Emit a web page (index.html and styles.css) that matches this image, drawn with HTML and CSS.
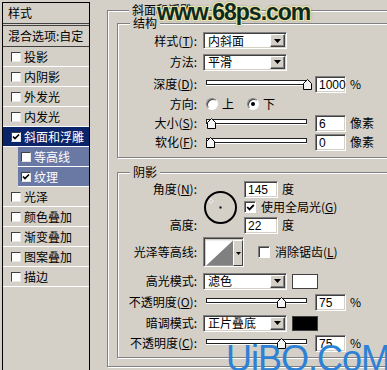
FILE: index.html
```html
<!DOCTYPE html>
<html lang="zh-CN">
<head>
  <meta charset="UTF-8">
  <meta name="viewport" content="width=device-width, initial-scale=1.0">
  <title>图层样式 - 斜面和浮雕</title>
  <link rel="stylesheet" href="styles.css">
</head>
<body>
<div class="dialog">
  <div class="styles-panel">
    <div class="panel-head">样式</div>
    <div class="panel-blend">混合选项:自定</div>
    <ul class="style-list">
      <li><span class="check"></span>投影</li>
      <li><span class="check"></span>内阴影</li>
      <li><span class="check"></span>外发光</li>
      <li><span class="check"></span>内发光</li>
      <li class="active"><span class="check"><svg width="8" height="8" viewBox="0 0 8 8"><path d="M1 3.5L3 5.6L7 1.5" fill="none" stroke="#000" stroke-width="1.7"/></svg></span>斜面和浮雕</li>
      <li class="sub"><span class="check"></span>等高线</li>
      <li class="sub"><span class="check"><svg width="8" height="8" viewBox="0 0 8 8"><path d="M1 3.5L3 5.6L7 1.5" fill="none" stroke="#000" stroke-width="1.7"/></svg></span>纹理</li>
      <li><span class="check"></span>光泽</li>
      <li><span class="check"></span>颜色叠加</li>
      <li><span class="check"></span>渐变叠加</li>
      <li><span class="check"></span>图案叠加</li>
      <li><span class="check"></span>描边</li>
    </ul>
  </div>

  <div class="main">
    <div class="group outer">
      <div class="group-title">斜面和浮雕</div>

      <div class="group structure">
        <div class="group-title">结构</div>
        <div class="form-grid">
          <label>样式(<u>T</u>):</label>
          <div class="select"><span>内斜面</span><span class="drop"><svg width="7" height="4" viewBox="0 0 7 4"><path d="M0 0h7L3.5 4z"/></svg></span></div>

          <label>方法:</label>
          <div class="select"><span>平滑</span><span class="drop"><svg width="7" height="4" viewBox="0 0 7 4"><path d="M0 0h7L3.5 4z"/></svg></span></div>

          <label>深度(<u>D</u>):</label>
          <div class="field">
            <div class="slider"><div class="track"></div><svg class="thumb" style="left: 97px" width="9" height="11" viewBox="0 0 9 11"><path d="M0.5 4.5L4.5 0.5L8.5 4.5V10.5H0.5Z" fill="#f4f4f4" stroke="#000"/></svg></div>
            <span class="num">1000</span><span class="unit">%</span>
          </div>

          <label>方向:</label>
          <div class="field">
            <span class="radio"></span><span class="radio-text">上</span>
            <span class="radio on"></span><span class="radio-text">下</span>
          </div>

          <label>大小(<u>S</u>):</label>
          <div class="field">
            <div class="slider"><div class="track"></div><svg class="thumb" style="left: 1px" width="9" height="11" viewBox="0 0 9 11"><path d="M0.5 4.5L4.5 0.5L8.5 4.5V10.5H0.5Z" fill="#f4f4f4" stroke="#000"/></svg></div>
            <span class="num">6</span><span class="unit">像素</span>
          </div>

          <label>软化(<u>F</u>):</label>
          <div class="field">
            <div class="slider"><div class="track"></div><svg class="thumb" style="left: 0px" width="9" height="11" viewBox="0 0 9 11"><path d="M0.5 4.5L4.5 0.5L8.5 4.5V10.5H0.5Z" fill="#f4f4f4" stroke="#000"/></svg></div>
            <span class="num">0</span><span class="unit">像素</span>
          </div>
        </div>
      </div>

      <div class="group shading">
        <div class="group-title">阴影</div>
        <div class="form-grid shade-grid">
          <label>角度(<u>N</u>):</label>
          <div class="dial">
            <svg width="35" height="35" viewBox="0 0 35 35">
              <circle cx="17.5" cy="17.5" r="15.5" fill="none" stroke="#000" stroke-width="2"/>
              <rect x="16.5" y="16.5" width="2" height="2" fill="#000"/>
              <path d="M8 8.5v5M5.5 11h5" stroke="#fff" stroke-width="1"/>
              <rect x="7.5" y="10.5" width="1" height="1" fill="#555"/>
            </svg>
          </div>
          <div class="field"><span class="num wide">145</span><span class="unit">度</span></div>

          <span></span>
          <div class="field"><span class="box"><svg width="9" height="9" viewBox="0 0 9 9"><path d="M1.2 4L3.5 6.4L7.8 2" fill="none" stroke="#000" stroke-width="1.8"/></svg></span><span class="box-text">使用全局光(<u>G</u>)</span></div>

          <label>高度:</label>
          <div class="field"><span class="num wide">22</span><span class="unit">度</span></div>

          <label>光泽等高线:</label>
          <div class="contour">
            <svg width="28" height="26" viewBox="0 0 28 26"><rect width="28" height="26" fill="#fff"/><path d="M0 26L28 0V26Z" fill="#808080"/></svg>
            <span class="contour-drop"><svg width="5" height="3" viewBox="0 0 5 3"><path d="M0 0h5L2.5 3z"/></svg></span>
          </div>
          <div class="field"><span class="box anti"></span><span class="box-text">消除锯齿(<u>L</u>)</span></div>

          <label>高光模式:</label>
          <div class="field span">
            <div class="select"><span>滤色</span><span class="drop"><svg width="7" height="4" viewBox="0 0 7 4"><path d="M0 0h7L3.5 4z"/></svg></span></div>
            <span class="swatch light"></span>
          </div>

          <label>不透明度(<u>O</u>):</label>
          <div class="field span">
            <div class="slider"><div class="track"></div><svg class="thumb" style="left: 71px" width="9" height="11" viewBox="0 0 9 11"><path d="M0.5 4.5L4.5 0.5L8.5 4.5V10.5H0.5Z" fill="#f4f4f4" stroke="#000"/></svg></div>
            <span class="num">75</span><span class="unit">%</span>
          </div>

          <label>暗调模式:</label>
          <div class="field span">
            <div class="select"><span>正片叠底</span><span class="drop"><svg width="7" height="4" viewBox="0 0 7 4"><path d="M0 0h7L3.5 4z"/></svg></span></div>
            <span class="swatch dark"></span>
          </div>

          <label>不透明度(<u>C</u>):</label>
          <div class="field span">
            <div class="slider"><div class="track"></div><svg class="thumb" style="left: 71px" width="9" height="11" viewBox="0 0 9 11"><path d="M0.5 4.5L4.5 0.5L8.5 4.5V10.5H0.5Z" fill="#f4f4f4" stroke="#000"/></svg></div>
            <span class="num">75</span><span class="unit">%</span>
          </div>
        </div>
      </div>
    </div>
  </div>
</div>

<div class="watermark site">www.68ps.com</div>
<div class="watermark brand">UiBQ.CoM</div>
</body>
</html>
```

FILE: styles.css
```css
* {
  box-sizing: border-box;
}
body {
  margin: 0;
  width: 387px;
  height: 370px;
  overflow: hidden;
  position: relative;
  background: #d4d0c8;
  color: #000;
  font: 12px/14px "Noto Sans CJK SC", "Liberation Sans", sans-serif;
}
.dialog {
  display: flex;
  height: 100%;
}

/* left list of styles */
.styles-panel {
  flex: none;
  width: 88px;
  margin: 2px 0 0 2px;
  border: 1px solid #000;
  border-bottom: none;
}
.panel-head {
  height: 23px;
  padding: 3px 0 0 5px;
  border-bottom: 3px double #404040;
}
.panel-blend {
  height: 21px;
  padding: 3px 0 0 5px;
  border-bottom: 1px solid #404040;
}
.style-list {
  list-style: none;
  margin: 0;
  padding: 0;
}
.style-list li {
  display: flex;
  align-items: center;
  height: 20px;
  padding-left: 8px;
  border-bottom: 1px solid #fff;
}
.style-list li.active {
  background: #0a246a;
  color: #fff;
}
.style-list li.sub {
  margin-left: 15px;
  padding-left: 3px;
  background: #6a78a4;
  color: #fff;
}
.check {
  display: flex;
  align-items: center;
  justify-content: center;
  width: 10px;
  height: 10px;
  margin-right: 3px;
  background: #fff;
  border: 1px solid;
  border-color: #404040 #e8e8e8 #e8e8e8 #404040;
}

/* group boxes */
.main {
  flex: none;
  width: 310px;
  padding-left: 17px;
}
.group {
  border: 1px solid #808080;
  box-shadow: inset 1px 1px #fff, 1px 1px #fff;
}
.group-title {
  display: table;
  margin: -8px 0 0 12px;
  padding: 0 3px;
  background: #d4d0c8;
}
.outer {
  width: 300px;
  margin-top: 10px;
  padding: 0 9px 8px;
}
.structure {
  margin-top: 6px;
  padding-bottom: 6px;
}
.shading {
  margin-top: 14px;
  padding-bottom: 5px;
}

/* form rows */
.form-grid {
  display: grid;
  grid-template-columns: 85px 1fr;
  grid-template-rows: 21px 22px 22px 18px 20px 18px;
  align-items: center;
}
.form-grid label {
  padding-right: 6px;
  text-align: right;
  white-space: nowrap;
}
.shade-grid {
  margin-top: 1px;
  grid-template-columns: 85px 41px 1fr;
  grid-template-rows: 18px 18px 18px 36px 22px 20px 22px 18px;
}
.field {
  display: flex;
  align-items: center;
}
.field.span {
  grid-column: span 2;
}

.select {
  display: flex;
  align-items: center;
  width: 84px;
  height: 17px;
  padding: 1px 1px 1px 4px;
  background: #fff;
  border: 1px solid;
  border-color: #808080 #fff #fff #808080;
  box-shadow: inset 1px 1px #404040, inset -1px -1px #d4d0c8;
}
.drop {
  display: flex;
  align-items: center;
  justify-content: center;
  width: 15px;
  height: 13px;
  margin-left: auto;
  background: #d4d0c8;
  border: 1px solid;
  border-color: #fff #404040 #404040 #fff;
  box-shadow: inset -1px -1px #808080;
}

.num {
  width: 31px;
  height: 17px;
  padding: 1px 0 0 3px;
  background: #fff;
  border: 1px solid;
  border-color: #808080 #fff #fff #808080;
  box-shadow: inset 1px 1px #404040, inset -1px -1px #d4d0c8;
  font: 12px/14px "Liberation Sans", sans-serif;
}
.num.wide {
  width: 34px;
}
.unit {
  margin-left: 4px;
}

.slider {
  position: relative;
  width: 101px;
  height: 11px;
  margin: 0 8px 0 3px;
}
.track {
  margin-top: 1px;
  height: 5px;
  background: #fff;
  border: 1px solid #202020;
  box-shadow: 0 1px #fff;
}
.thumb {
  position: absolute;
  top: 0;
}

.radio {
  width: 12px;
  height: 12px;
  margin-left: 3px;
  border-radius: 50%;
  background: #fff;
  border: 1px solid;
  border-color: #808080 #fff #fff #808080;
  box-shadow: inset 1px 1px #404040;
  display: flex;
  align-items: center;
  justify-content: center;
}
.radio.on::after {
  content: "";
  width: 4px;
  height: 4px;
  border-radius: 50%;
  background: #000;
}
.radio-text {
  margin: 0 10px 0 4px;
}

.dial {
  grid-row: span 3;
  display: flex;
}
.box {
  display: flex;
  align-items: center;
  justify-content: center;
  width: 12px;
  height: 12px;
  background: #fff;
  border: 1px solid;
  border-color: #808080 #fff #fff #808080;
  box-shadow: inset 1px 1px #404040;
}
.box.anti {
  margin-left: 14px;
}
.box-text {
  margin-left: 5px;
}

.contour {
  display: flex;
  width: 41px;
  height: 30px;
  padding: 2px 0 0 2px;
  border: 1px solid;
  border-color: #808080 #fff #fff #808080;
  box-shadow: inset 1px 1px #404040;
}
.contour-drop {
  display: flex;
  align-items: center;
  justify-content: center;
  width: 10px;
  height: 26px;
  background: #d4d0c8;
  border: 1px solid;
  border-color: #fff #404040 #404040 #fff;
}

.swatch {
  width: 26px;
  height: 15px;
  margin-left: 5px;
  border: 1px solid #404040;
}
.swatch.light {
  background: #fff;
}
.swatch.dark {
  background: #000;
}

/* watermarks stamped over the screenshot */
.watermark {
  position: absolute;
  white-space: nowrap;
}
.site {
  left: 157px;
  top: 1px;
  font: bold 23px/22px "Liberation Sans", sans-serif;
  letter-spacing: -1px;
  color: #0c2a21;
  text-shadow: 1px 0 #ece4a6, -1px 0 #ece4a6, 0 1px #ece4a6, 0 -1px #ece4a6,
    1px 1px #ece4a6, -1px -1px #ece4a6, 1px -1px #ece4a6, -1px 1px #ece4a6,
    0 0 3px #2a3a2a;
}
.brand {
  left: 226px;
  top: 341px;
  font: 36px/36px "Liberation Sans", sans-serif;
  letter-spacing: -1px;
  color: #2e82d6;
}
```
